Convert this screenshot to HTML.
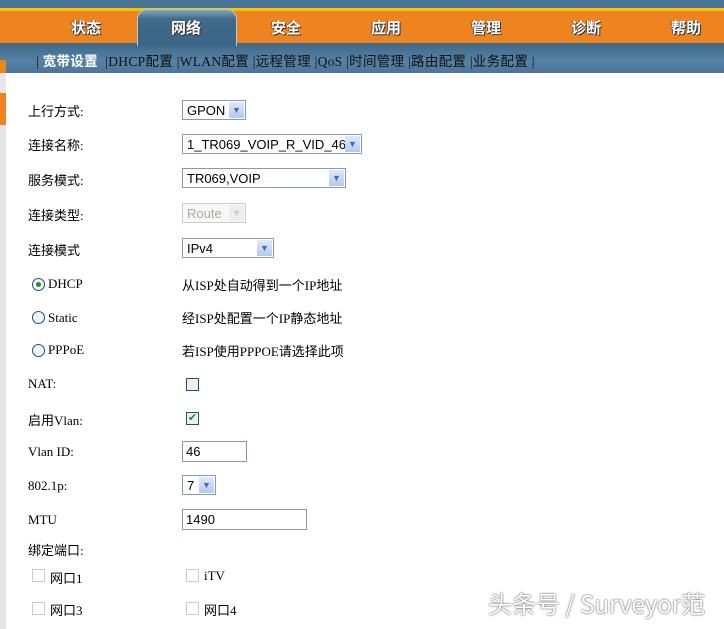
<!DOCTYPE html>
<html><head><meta charset="utf-8"><style>
body{margin:0;width:724px;height:629px;position:relative;overflow:hidden;background:#fff;font-family:"Liberation Serif","Noto Serif CJK SC","Noto Sans CJK SC",serif;font-size:12px;color:#000}
.a{position:absolute}
.top{left:0;top:0;width:724px;height:8px;background:#4a7596}
.yl{left:0;top:8px;width:724px;height:3px;background:#f7c400}
.or{left:0;top:11px;width:724px;height:32px;background:#ee8420}
.sub{left:0;top:43px;width:724px;height:30px;background:linear-gradient(#3f6786,#5582a6 60%,#4c7698)}
.tab{left:137px;top:9px;width:98px;height:36px;background:linear-gradient(#8aa4b8,#3f6a8a 25%,#3c6586);border-radius:10px 10px 0 0;border:1px solid #b8c8d4;border-bottom:none}
.m{top:17px;font:bold 15px "Noto Sans CJK SC",sans-serif;color:#fff;text-shadow:1px 1px 0 #333,-1px 0 0 #555;}
.s{top:50px;font-size:13.5px;letter-spacing:0.3px;color:#111;font-family:"Liberation Serif","Noto Sans CJK SC",serif;white-space:nowrap}
.s b{color:#fff}
.lbl{left:28px;font-size:13px;font-family:"Liberation Serif","Noto Sans CJK SC",serif}
.sel{position:absolute;height:20px;border:1px solid #7f9db9;box-sizing:border-box;background:#fff;font:13px "Liberation Sans",sans-serif;padding:2px 0 0 4px}
.sel i{position:absolute;right:1px;top:1px;width:15px;height:16px;background:linear-gradient(#dfe9fb,#b4c8ef);font-style:normal;font-size:9px;color:#4a6ab0;text-align:center;line-height:16px}
.inp{position:absolute;height:21px;border:1px solid #7f9db9;box-sizing:border-box;font:13px "Liberation Sans",sans-serif;padding:2px 0 0 3px}
.cb{position:absolute;width:11px;height:11px;border:1px solid #1c5180;background:#eee}
.cbl{position:absolute;width:11px;height:11px;border:1px solid #ccc;background:#fff}
.rd{position:absolute;width:11px;height:11px;border:1px solid #1c5180;border-radius:50%;background:#f4f4f4}
</style></head><body>
<div class="a top"></div><div class="a yl"></div><div class="a or"></div><div class="a sub"></div>
<div class="a tab"></div>
<div class="a" style="left:0;top:60px;width:6px;height:13px;background:#ee8420"></div>
<div class="a" style="left:0;top:73px;width:6px;height:556px;background:#e6e6e6"></div>
<div class="a" style="left:0;top:93px;width:6px;height:32px;background:#ee8420"></div>
<div class="a m" style="left:71px">状态</div>
<div class="a m" style="left:171px">网络</div>
<div class="a m" style="left:271px">安全</div>
<div class="a m" style="left:371px">应用</div>
<div class="a m" style="left:471px">管理</div>
<div class="a m" style="left:571px">诊断</div>
<div class="a m" style="left:671px">帮助</div>
<div class="a s" style="left:36px">|<b style="font-weight:bold"> 宽带设置</b> &nbsp;|DHCP配置 |WLAN配置 |远程管理 |QoS |时间管理 |路由配置 |业务配置 |</div>

<div class="a lbl" style="top:101px">上行方式:</div>
<div class="sel" style="left:182px;top:100px;width:64px">GPON<i>▼</i></div>
<div class="a lbl" style="top:135px">连接名称:</div>
<div class="sel" style="left:182px;top:134px;width:180px">1_TR069_VOIP_R_VID_46<i>▼</i></div>
<div class="a lbl" style="top:170px">服务模式:</div>
<div class="sel" style="left:182px;top:168px;width:164px">TR069,VOIP<i>▼</i></div>
<div class="a lbl" style="top:205px">连接类型:</div>
<div class="sel" style="left:182px;top:203px;width:64px;color:#aaa;border-color:#ccc;background:#f8f8f5">Route<i style="background:#eee;color:#ccc">▼</i></div>
<div class="a lbl" style="top:240px">连接模式</div>
<div class="sel" style="left:182px;top:238px;width:92px">IPv4<i>▼</i></div>

<div class="rd" style="left:32px;top:278px"><div style="width:5px;height:5px;background:#2a8a2a;border-radius:50%;margin:3px"></div></div>
<div class="a lbl" style="left:48px;top:276px">DHCP</div>
<div class="a lbl" style="left:182px;top:275px">从ISP处自动得到一个IP地址</div>
<div class="rd" style="left:32px;top:311px"></div>
<div class="a lbl" style="left:48px;top:310px">Static</div>
<div class="a lbl" style="left:182px;top:308px">经ISP处配置一个IP静态地址</div>
<div class="rd" style="left:32px;top:344px"></div>
<div class="a lbl" style="left:48px;top:342px">PPPoE</div>
<div class="a lbl" style="left:182px;top:341px">若ISP使用PPPOE请选择此项</div>

<div class="a lbl" style="top:376px">NAT:</div>
<div class="cb" style="left:186px;top:378px"></div>
<div class="a lbl" style="top:410px">启用Vlan:</div>
<div class="cb" style="left:186px;top:412px;color:#2a8a2a;font-size:11px;line-height:11px;text-align:center">✔</div>
<div class="a lbl" style="top:444px">Vlan ID:</div>
<div class="inp" style="left:182px;top:441px;width:65px">46</div>
<div class="a lbl" style="top:478px">802.1p:</div>
<div class="sel" style="left:182px;top:475px;width:34px">7<i>▼</i></div>
<div class="a lbl" style="top:512px">MTU</div>
<div class="inp" style="left:182px;top:509px;width:125px">1490</div>
<div class="a lbl" style="top:540px">绑定端口:</div>
<div class="cbl" style="left:32px;top:569px"></div><div class="a lbl" style="left:50px;top:568px">网口1</div>
<div class="cbl" style="left:186px;top:569px"></div><div class="a lbl" style="left:204px;top:568px">iTV</div>
<div class="cbl" style="left:32px;top:602px"></div><div class="a lbl" style="left:50px;top:600px">网口3</div>
<div class="cbl" style="left:186px;top:602px"></div><div class="a lbl" style="left:204px;top:600px">网口4</div>
<div class="a" style="left:488px;top:585px;font:24px 'Noto Sans CJK SC',sans-serif;color:#fff;text-shadow:0 0 2px #666,0 0 1px #666;white-space:nowrap">头条号 / Surveyor范</div>
</body></html>
